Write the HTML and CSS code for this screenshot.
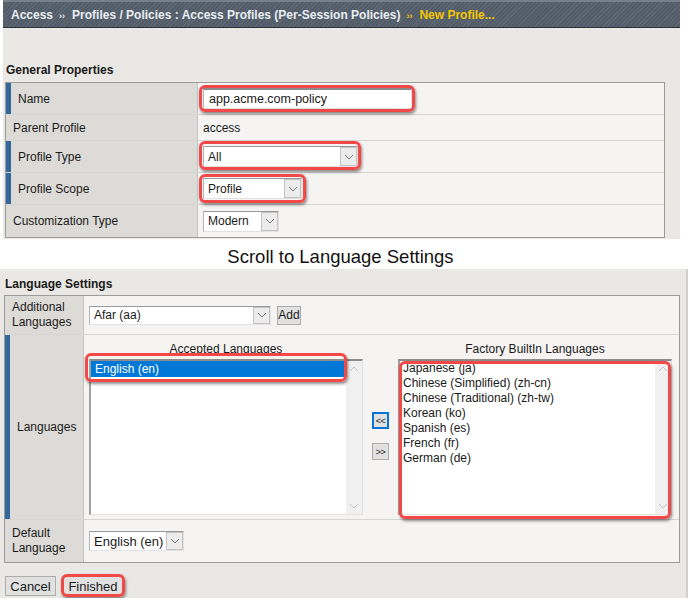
FILE: index.html
```html
<!DOCTYPE html>
<html>
<head>
<meta charset="utf-8">
<link rel="stylesheet" href="styles.css">
</head>
<body>
<div class="top">
  <div class="crumb">
    <span>Access</span><span class="sep">››</span><span>Profiles / Policies : Access Profiles (Per-Session Policies)</span><span class="sep cur">››</span><span class="cur">New Profile...</span>
  </div>
  <div class="sect">General Properties</div>
  <div class="form gp">
    <div class="row r32"><div class="lab req">Name</div><div class="val"><div class="inp hl hl-name">app.acme.com-policy</div></div></div>
    <div class="row r26"><div class="lab">Parent Profile</div><div class="val">access</div></div>
    <div class="row r32"><div class="lab req">Profile Type</div><div class="val"><div class="sel w155 hl hl-type"><span class="txt">All</span><span class="arr"><svg width="10" height="8" viewBox="0 0 10 8"><polyline points="1,2 5,6 9,2" fill="none" stroke="#7a7a7a" stroke-width="1"/></svg></span></div></div></div>
    <div class="row r32"><div class="lab req">Profile Scope</div><div class="val"><div class="sel w99 hl hl-scope"><span class="txt">Profile</span><span class="arr"><svg width="10" height="8" viewBox="0 0 10 8"><polyline points="1,2 5,6 9,2" fill="none" stroke="#7a7a7a" stroke-width="1"/></svg></span></div></div></div>
    <div class="row r32 last"><div class="lab">Customization Type</div><div class="val"><div class="sel w76"><span class="txt">Modern</span><span class="arr"><svg width="10" height="8" viewBox="0 0 10 8"><polyline points="1,2 5,6 9,2" fill="none" stroke="#7a7a7a" stroke-width="1"/></svg></span></div></div></div>
  </div>
</div>
<div class="band">Scroll to Language Settings</div>
<div class="bottom">
  <div class="sect2">Language Settings</div>
  <div class="form ls">
    <div class="row2 r39"><div class="lab2">Additional<br>Languages</div><div class="val2"><div class="sel w182 h19"><span class="txt">Afar (aa)</span><span class="arr"><svg width="10" height="8" viewBox="0 0 10 8"><polyline points="1,2 5,6 9,2" fill="none" stroke="#7a7a7a" stroke-width="1"/></svg></span></div><div class="btn add">Add</div></div></div>
    <div class="row2 r185"><div class="lab2 req">Languages</div>
      <div class="langs">
        <div class="col">
          <div class="colh">Accepted Languages</div>
          <div class="list">
            <div class="items"><div class="item selitem hl hl-en">English (en)</div></div>
            <div class="sb"><svg width="10" height="8" viewBox="0 0 10 8"><polyline points="1,6 5,2 9,6" fill="none" stroke="#c4c4c4"/></svg><svg width="10" height="8" viewBox="0 0 10 8"><polyline points="1,2 5,6 9,2" fill="none" stroke="#c4c4c4"/></svg></div>
          </div>
        </div>
        <div class="mid">
          <div class="mbtn focus">&lt;&lt;</div>
          <div class="mbtn">&gt;&gt;</div>
        </div>
        <div class="col">
          <div class="colh">Factory BuiltIn Languages</div>
          <div class="list hl hl-fact">
            <div class="items">
              <div class="item">Japanese (ja)</div>
              <div class="item">Chinese (Simplified) (zh-cn)</div>
              <div class="item">Chinese (Traditional) (zh-tw)</div>
              <div class="item">Korean (ko)</div>
              <div class="item">Spanish (es)</div>
              <div class="item">French (fr)</div>
              <div class="item">German (de)</div>
            </div>
            <div class="sb"><svg width="10" height="8" viewBox="0 0 10 8"><polyline points="1,6 5,2 9,6" fill="none" stroke="#c4c4c4"/></svg><svg width="10" height="8" viewBox="0 0 10 8"><polyline points="1,2 5,6 9,2" fill="none" stroke="#c4c4c4"/></svg></div>
          </div>
        </div>
      </div>
    </div>
    <div class="row2 r42 last"><div class="lab2">Default<br>Language</div><div class="val2"><div class="sel w95 h20"><span class="txt big">English (en)</span><span class="arr"><svg width="10" height="8" viewBox="0 0 10 8"><polyline points="1,2 5,6 9,2" fill="none" stroke="#7a7a7a" stroke-width="1"/></svg></span></div></div></div>
  </div>
  <div class="actions">
    <div class="btn act w51">Cancel</div>
    <div class="btn act w60 hl hl-fin">Finished</div>
  </div>
</div>
</body>
</html>
```
FILE: styles.css
```css
* { box-sizing: border-box; }
body {
  margin: 0;
  background: #fff;
  font-family: "Liberation Sans", Arial, sans-serif;
  font-size: 12px;
  color: #1a1a1a;
}
.top {
  margin-left: 3px;
  width: 677px;
  background: #eae8e4;
  padding-bottom: 1px;
}
.crumb {
  height: 28px;
  display: flex;
  align-items: center;
  padding: 1px 0 0 8px;
  font-weight: bold;
  font-size: 12px;
  color: #e9eef3;
  background-color: #525d69;
  background-image: repeating-linear-gradient(135deg, rgba(255,255,255,0.07) 0 1px, rgba(0,0,0,0) 1px 3px);
  border-top: 2px solid #75808b;
  border-bottom: 1px solid #2a3036;
}
.crumb .sep {
  font-size: 9px;
  margin: 2px 7px 0 6px;
}
.crumb .cur { color: #f5c600; }
.sect {
  margin: 35px 0 5px 3px;
  font-weight: bold;
  line-height: 14px;
}
.form {
  border: 1px solid #9c9c9c;
  background: #f5f4f2;
}
.gp { width: 660px; margin-left: 2px; }
.row {
  display: grid;
  grid-template-columns: 192px 1fr;
  border-bottom: 1px solid #d6d6d6;
}
.row.last, .row2.last { border-bottom: none; }
.r32 { height: 32px; }
.r26 { height: 26px; }
.lab {
  background: #dddbd7;
  border-right: 1px solid #c4c4c4;
  display: flex;
  align-items: center;
  padding-left: 7px;
}
.req { border-left: 5px solid #36679a; }
.val {
  display: flex;
  align-items: center;
  padding-left: 5px;
}
.inp {
  width: 209px;
  height: 22px;
  background: #fff;
  border-top: 2px solid #8a8a8a;
  border-left: 1px solid #b0b0b0;
  border-right: 1px solid #e6e6e6;
  border-bottom: 2px solid #e0e0e0;
  padding-left: 5px;
  display: flex;
  align-items: center;
  font-size: 12.5px;
}
.sel {
  display: flex;
  height: 21px;
  background: #fff;
  border-top: 1px solid #9a9a9a;
  border-left: 1px solid #b4b4b4;
  border-bottom: 1px solid #e2e2e2;
  border-right: 1px solid #e2e2e2;
}
.sel .txt {
  flex: 1;
  display: flex;
  align-items: center;
  padding-left: 4px;
}
.sel .txt.big { font-size: 13px; }
.sel .arr {
  width: 17px;
  background: #ececec;
  border: 1px solid #c2c2c2;
  display: flex;
  align-items: center;
  justify-content: center;
}
.w155 { width: 155px; }
.w99 { width: 99px; }
.w76 { width: 76px; }
.w182 { width: 182px; }
.w95 { width: 95px; }
.h19 { height: 19px; }
.h20 { height: 20px; }
.hl { position: relative; }
.hl::after {
  content: "";
  position: absolute;
  border: 3px solid #f24848;
  border-radius: 6px;
  box-shadow: 1px 2px 3px rgba(0,0,0,0.45);
  pointer-events: none;
}
.hl-name::after { inset: -5px -4px -4px -5px; }
.hl-type::after { inset: -6px -4px -4px -5px; }
.hl-scope::after { inset: -5px -5px -5px -5px; }
.hl-en::after { inset: -8px -1px -5px -6px; }
.hl-fact::after { inset: 0 0 -5px -1px; }
.hl-fin::after { inset: -3px -3px -2px -3px; }
.band {
  margin-left: 3px;
  width: 675px;
  height: 30px;
  padding-top: 7px;
  line-height: 22px;
  text-align: center;
  font-size: 18.5px;
  color: #111;
  background: #fff;
}
.bottom {
  width: 688px;
  background: #eae8e4;
  border-right: 2px solid #cfcfcf;
  padding: 8px 0 2px 0;
}
.sect2 {
  margin: 0 0 4px 5px;
  font-weight: bold;
  line-height: 14px;
}
.ls { width: 676px; margin-left: 4px; }
.row2 {
  display: grid;
  grid-template-columns: 79px 1fr;
  border-bottom: 1px solid #d6d6d6;
}
.r39 { height: 39px; }
.r185 { height: 185px; }
.r42 { height: 42px; }
.lab2 {
  background: #dddbd7;
  border-right: 1px solid #c4c4c4;
  display: flex;
  align-items: center;
  padding-left: 7px;
  line-height: 15px;
  font-size: 12px;
}
.val2 {
  display: flex;
  align-items: center;
  padding-left: 5px;
  gap: 6px;
}
.btn {
  background: #e1e1e1;
  border: 1px solid #adadad;
  display: flex;
  align-items: center;
  justify-content: center;
}
.add { width: 24px; height: 19px; font-size: 12px; }
.langs {
  display: grid;
  grid-template-columns: 274px 17px 274px;
  column-gap: 9px;
  padding: 7px 0 0 5px;
}
.colh {
  text-align: center;
  line-height: 14px;
  margin-bottom: 3px;
}
.list {
  height: 156px;
  background: #fff;
  display: flex;
  border-top: 2px solid #8c8c8c;
  border-left: 2px solid #a0a0a0;
  border-right: 1px solid #e2e2e2;
  border-bottom: 1px solid #e2e2e2;
}
.items { flex: 1; }
.item {
  height: 15px;
  line-height: 15px;
  padding-left: 3px;
  font-size: 12px;
}
.selitem {
  background: #0078d7;
  color: #fff;
  height: 16px;
  line-height: 16px;
  padding-left: 4px;
}
.sb {
  width: 16px;
  background: #f0f0f0;
  display: flex;
  flex-direction: column;
  justify-content: space-between;
  align-items: center;
  padding: 4px 0 4px 0;
}
.mid {
  display: flex;
  flex-direction: column;
  padding-top: 70px;
  gap: 14px;
}
.mbtn {
  width: 17px;
  height: 17px;
  background: #e1e1e1;
  border: 1px solid #adadad;
  font-size: 9px;
  display: flex;
  align-items: center;
  justify-content: center;
  letter-spacing: -0.5px;
}
.mbtn.focus { border: 2px solid #0a72d4; }
.actions {
  display: flex;
  gap: 7px;
  margin: 13px 0 0 5px;
}
.act { height: 20px; font-size: 13px; }
.w51 { width: 51px; }
.w60 { width: 60px; }
```
